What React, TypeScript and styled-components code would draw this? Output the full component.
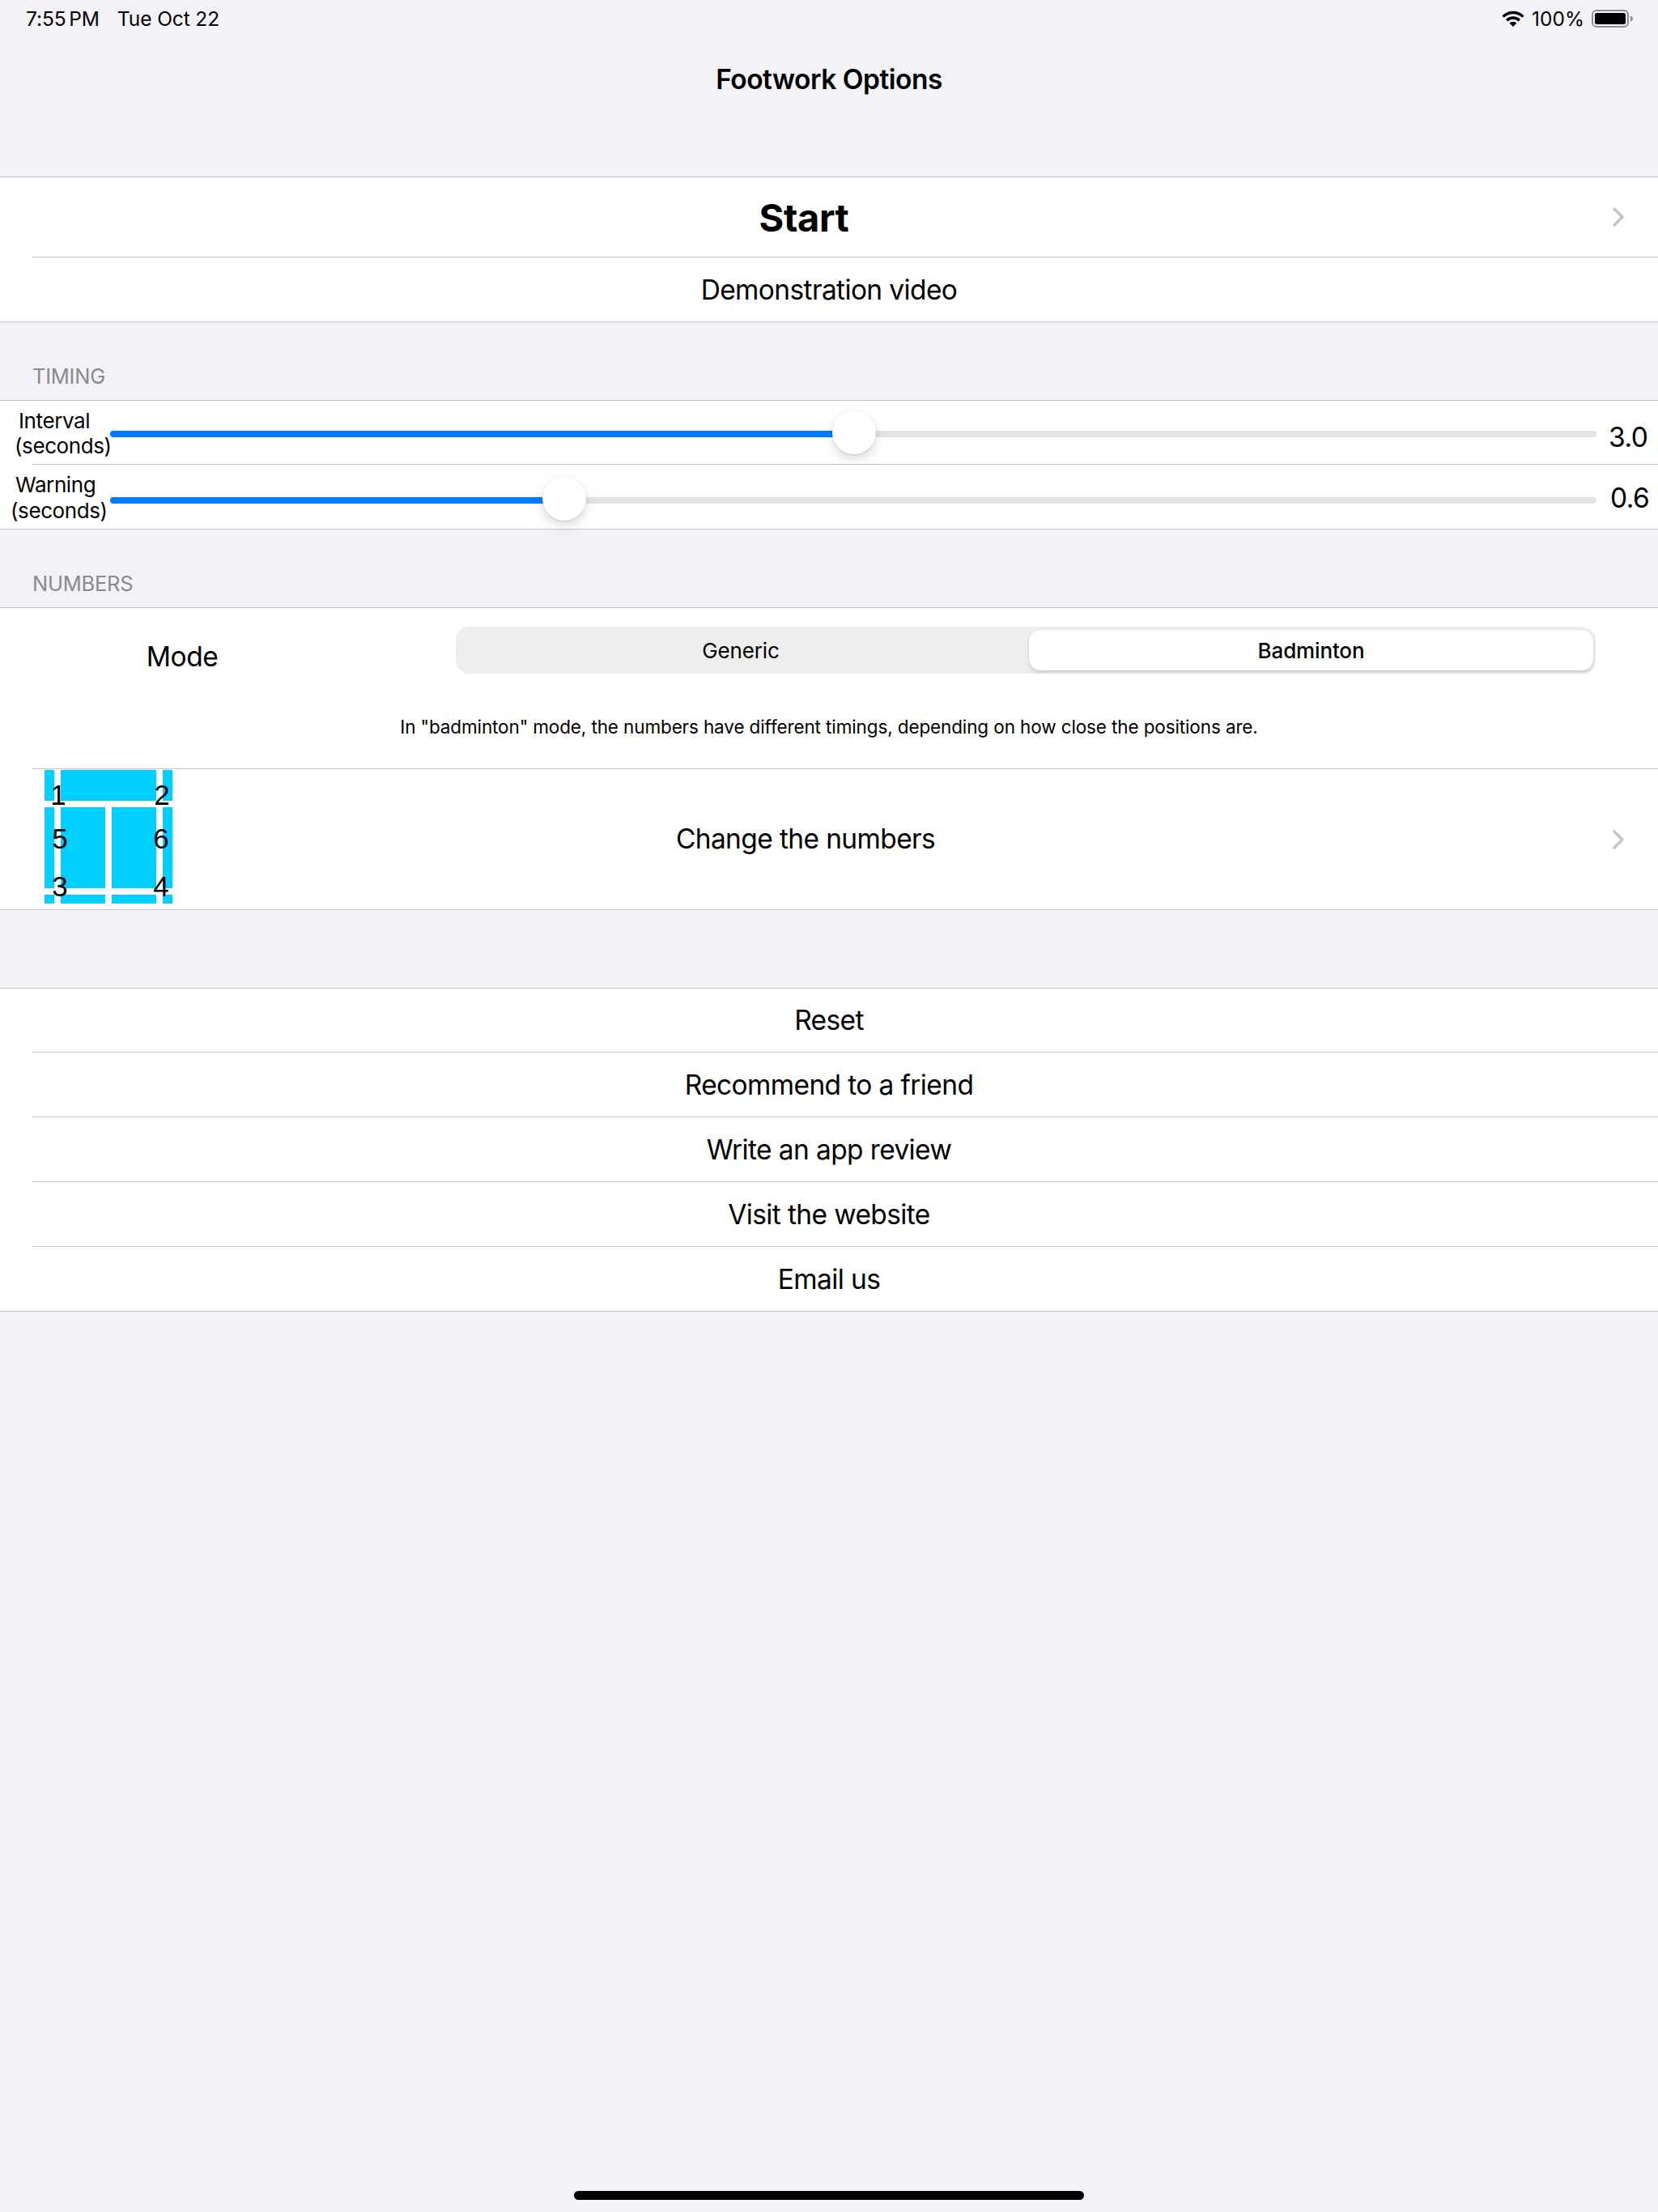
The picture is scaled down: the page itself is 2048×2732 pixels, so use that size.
import {FC} from "react";
import styled, {createGlobalStyle} from "styled-components";

const GlobalStyle = createGlobalStyle`
	html,
	body {
		margin: 0;
		padding: 0;
		background: #f2f2f7;
	}
`;

const Page = styled.div`
	display: flex;
	flex-direction: column;
	width: 2048px;
	height: 2732px;
	background: #f2f2f7;
	color: #000;
	font-family: Inter, "Noto Sans", sans-serif;
	overflow: hidden;
`;

const StatusBar = styled.div`
	display: flex;
	align-items: center;
	height: 46px;
	padding: 0 30px 0 32px;
	font-size: 24.5px;
	letter-spacing: -0.1px;
`;

const StatusTime = styled.span`
	word-spacing: -3px;
`;

const StatusDate = styled.span`
	margin-left: 22px;
	flex: 1;
`;

const StatusPercent = styled.span`
	margin: 0 9px 0 9px;
	letter-spacing: 0;
`;

const NavBar = styled.div`
	height: 172px;
	padding-top: 30px;
	box-sizing: border-box;
	text-align: center;
	font-size: 33.5px;
	line-height: 44px;
	font-weight: 600;
	letter-spacing: -0.5px;
`;

const Section = styled.div`
	background: #fff;
	border-top: 1px solid #c6c6c8;
	border-bottom: 1px solid #c6c6c8;
`;

const Separator = styled.div`
	height: 1px;
	margin-left: 40px;
	background: #c6c6c8;
`;

const SectionHeader = styled.div`
	height: 96px;
	box-sizing: border-box;
	padding: 51px 0 0 40px;
	font-size: 25.5px;
	line-height: 32px;
	letter-spacing: -0.25px;
	color: #8a8a8e;
`;

const Spacer = styled.div`
	height: 96px;
`;

const ActionRow = styled.div<{$height: number}>`
	display: flex;
	align-items: center;
	justify-content: center;
	height: ${(p) => p.$height}px;
	font-size: 33.5px;
	letter-spacing: -0.62px;
`;

const StartLabel = styled.div`
	flex: 1;
	text-align: center;
	font-size: 47px;
	font-weight: 700;
	letter-spacing: -0.4px;
	padding-top: 1px;
`;

const Chevron = styled.svg`
	display: block;
	flex: none;
	width: 14px;
	height: 24px;
	margin: 0 42px 0 6px;
`;

const SliderRow = styled.div<{$height: number}>`
	display: flex;
	align-items: center;
	height: ${(p) => p.$height}px;
`;

const SliderLabel = styled.div`
	flex: none;
	width: 136px;
	margin-top: 2px;
	font-size: 26px;
	line-height: 31.5px;
	letter-spacing: -0.4px;
`;

const LabelLine = styled.div<{$indent: number}>`
	padding-left: ${(p) => p.$indent}px;
	white-space: nowrap;
`;

const Track = styled.div<{$offset: number}>`
	position: relative;
	flex: 1;
	height: 8px;
	margin-top: ${(p) => p.$offset}px;
	border-radius: 4px;
	background: #e3e3e5;
`;

const TrackFill = styled.div`
	height: 100%;
	border-radius: 4px 0 0 4px;
	background: #007aff;
`;

const Thumb = styled.div`
	position: absolute;
	top: -25px;
	width: 54px;
	height: 54px;
	margin-left: -27px;
	border-radius: 50%;
	background: #fff;
	box-shadow: 0 6px 14px rgba(0, 0, 0, 0.14), 0 1px 3px rgba(0, 0, 0, 0.1);
`;

const SliderValue = styled.div<{$top: number; $left: number}>`
	flex: none;
	width: 76px;
	box-sizing: border-box;
	margin-top: ${(p) => p.$top}px;
	padding-left: ${(p) => p.$left}px;
	font-size: 33.5px;
	letter-spacing: -0.5px;
	white-space: nowrap;
`;

const ModeRow = styled.div`
	display: flex;
	align-items: flex-start;
	padding-top: 23px;
`;

const ModeLabel = styled.div`
	flex: none;
	width: 450px;
	margin-top: 16px;
	text-align: center;
	font-size: 33.5px;
	line-height: 42px;
	letter-spacing: -0.5px;
`;

const Segmented = styled.div`
	display: grid;
	grid-template-columns: 1fr 697px;
	column-gap: 4px;
	box-sizing: border-box;
	width: 1408px;
	height: 58px;
	margin-left: 113px;
	padding: 4px 3px;
	border-radius: 16px;
	background: #eeeeee;
`;

const Segment = styled.div<{$active?: boolean}>`
	display: flex;
	align-items: center;
	justify-content: center;
	border-radius: 14px;
	font-size: 26px;
	letter-spacing: -0.15px;
	font-weight: ${(p) => (p.$active ? 500 : 400)};
	background: ${(p) => (p.$active ? "#fff" : "transparent")};
	box-shadow: ${(p) =>
		p.$active ? "0 3px 4px rgba(0, 0, 0, 0.12), 0 0 2px rgba(0, 0, 0, 0.08)" : "none"};
`;

const GenericText = styled.span`
	margin-right: 3px;
`;

const ModeNote = styled.div`
	height: 117px;
	box-sizing: border-box;
	padding-top: 50px;
	text-align: center;
	font-size: 22.5px;
	line-height: 32px;
	letter-spacing: -0.12px;
`;

const NumbersRow = styled.div`
	display: flex;
	align-items: center;
	height: 173px;
`;

const Court = styled.svg`
	display: block;
	flex: none;
	align-self: flex-start;
	width: 158px;
	height: 166px;
	margin-left: 55px;
`;

const NumbersLabel = styled.div`
	flex: 1;
	margin: 0 209px 2px 0;
	text-align: center;
	font-size: 33.5px;
	letter-spacing: -0.62px;
`;

const HomeIndicator = styled.div`
	flex: none;
	width: 630px;
	height: 11px;
	margin: auto auto 15px;
	border-radius: 6px;
	background: #000;
`;

const ChevronIcon: FC = () => (
	<Chevron viewBox="0 0 14 24">
		<path d="M2 2l10 10L2 22" fill="none" stroke="#c4c4c7" strokeWidth="3.4" strokeLinecap="round" strokeLinejoin="round" />
	</Chevron>
);

const WifiIcon: FC = () => (
	<svg width="28" height="20" viewBox="0 0 28 20">
		<path d="M1.630 7.630a17.500 17.500 0 0 1 24.740 0" fill="none" stroke="#000" strokeWidth="3.4" />
		<path d="M6.220 12.220a11 11 0 0 1 15.560 0" fill="none" stroke="#000" strokeWidth="3.4" />
		<path d="M14 20l-4.400-4.400a6.200 6.200 0 0 1 8.800 0z" />
	</svg>
);

const BatteryIcon: FC = () => (
	<svg width="52" height="22" viewBox="0 0 52 22">
		<rect x="1" y="1" width="44" height="20" rx="5" fill="none" stroke="#8e8e92" strokeWidth="2" />
		<rect x="4" y="4" width="38" height="14" rx="2.500" fill="#000" />
		<path d="M48 7.500c1.800.5 3 1.800 3 3.500s-1.200 3-3 3.500z" fill="#8e8e92" />
	</svg>
);

const CourtImage: FC = () => (
	<Court viewBox="55 949 158 166">
		<g fill="#00cfff">
			<rect x="55" y="950" width="12" height="38" />
			<rect x="75" y="950" width="118" height="38" />
			<rect x="201" y="950" width="12" height="38" />
			<rect x="55" y="996" width="12" height="100" />
			<rect x="75" y="996" width="55" height="100" />
			<rect x="138" y="996" width="55" height="100" />
			<rect x="201" y="996" width="12" height="100" />
			<rect x="55" y="1104" width="12" height="11" />
			<rect x="75" y="1104" width="55" height="11" />
			<rect x="138" y="1104" width="55" height="11" />
			<rect x="201" y="1104" width="12" height="11" />
		</g>
		<g fontFamily="'Liberation Sans', sans-serif" fontSize="35" textAnchor="middle" fill="#000">
			<text x="72" y="993">1</text>
			<text x="200" y="993">2</text>
			<text x="74" y="1047">5</text>
			<text x="199" y="1047">6</text>
			<text x="74" y="1106">3</text>
			<text x="199" y="1106">4</text>
		</g>
	</Court>
);

interface ISlider {
	first: string;
	firstIndent: number;
	secondIndent: number;
	height: number;
	position: number;
	trackOffset: number;
	value: string;
	valueTop: number;
	valueLeft: number;
}

const sliders: ISlider[] = [
	{first: "Interval", firstIndent: 23, secondIndent: 18, height: 78, position: 50.05, trackOffset: 4, value: "3.0", valueTop: 12, valueLeft: 15},
	{first: "Warning", firstIndent: 19, secondIndent: 13, height: 79, position: 30.55, trackOffset: 9, value: "0.6", valueTop: 3, valueLeft: 17},
];

const bottomActions = ["Reset", "Recommend to a friend", "Write an app review", "Visit the website", "Email us"];

const App: FC = () => {
	return (
		<Page>
			<GlobalStyle />
			<StatusBar>
				<StatusTime>7:55 PM</StatusTime>
				<StatusDate>Tue Oct 22</StatusDate>
				<WifiIcon />
				<StatusPercent>100%</StatusPercent>
				<BatteryIcon />
			</StatusBar>
			<NavBar>Footwork Options</NavBar>

			<Section>
				<ActionRow $height={98}>
					<StartLabel>Start</StartLabel>
					<ChevronIcon />
				</ActionRow>
				<Separator />
				<ActionRow $height={79}>Demonstration video</ActionRow>
			</Section>

			<SectionHeader>TIMING</SectionHeader>
			<Section>
				{sliders.map((slider, index) => (
					<div key={slider.first}>
						{index > 0 && <Separator />}
						<SliderRow $height={slider.height}>
							<SliderLabel>
								<LabelLine $indent={slider.firstIndent}>{slider.first}</LabelLine>
								<LabelLine $indent={slider.secondIndent}>(seconds)</LabelLine>
							</SliderLabel>
							<Track $offset={slider.trackOffset}>
								<TrackFill style={{width: `${slider.position}%`}} />
								<Thumb style={{left: `${slider.position}%`}} />
							</Track>
							<SliderValue $top={slider.valueTop} $left={slider.valueLeft}>
								{slider.value}
							</SliderValue>
						</SliderRow>
					</div>
				))}
			</Section>

			<SectionHeader>NUMBERS</SectionHeader>
			<Section>
				<ModeRow>
					<ModeLabel>Mode</ModeLabel>
					<Segmented>
						<Segment>
							<GenericText>Generic</GenericText>
						</Segment>
						<Segment $active>Badminton</Segment>
					</Segmented>
				</ModeRow>
				<ModeNote>In "badminton" mode, the numbers have different timings, depending on how close the positions are.</ModeNote>
				<Separator />
				<NumbersRow>
					<CourtImage />
					<NumbersLabel>Change the numbers</NumbersLabel>
					<ChevronIcon />
				</NumbersRow>
			</Section>

			<Spacer />
			<Section>
				{bottomActions.map((action, index) => (
					<div key={action}>
						{index > 0 && <Separator />}
						<ActionRow $height={index === 0 ? 78 : 79}>{action}</ActionRow>
					</div>
				))}
			</Section>

			<HomeIndicator />
		</Page>
	);
};

export default App;
